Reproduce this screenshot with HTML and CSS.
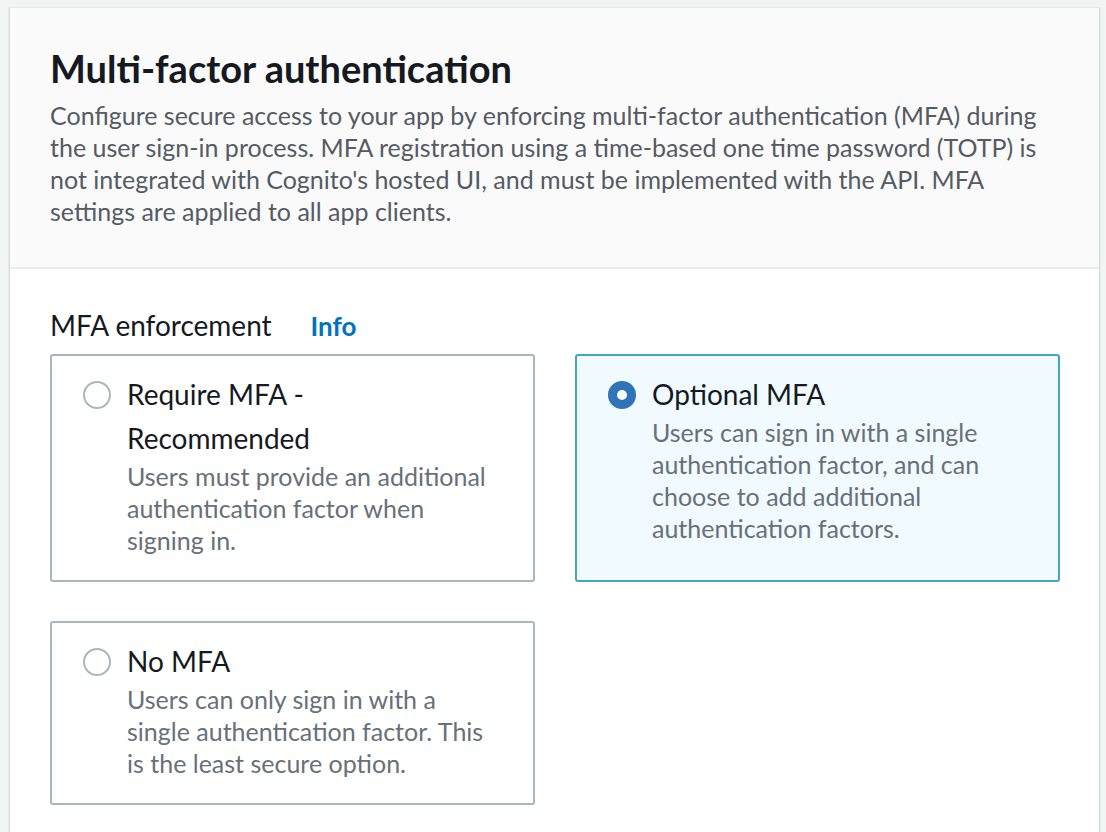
FILE: index.html
```html
<!DOCTYPE html>
<html lang="en">
<head>
<meta charset="utf-8">
<title>Multi-factor authentication</title>
<link rel="stylesheet" href="styles.css">
</head>
<body>
<div class="page">
  <section class="container">
    <header class="container-header">
      <h2 class="title">Multi-factor authentication</h2>
      <p class="description">Configure secure access to your app by enforcing multi-factor authentication (MFA) during the user sign-in process. MFA registration using a time-based one time password (TOTP) is not integrated with Cognito's hosted UI, and must be implemented with the API. MFA settings are applied to all app clients.</p>
    </header>
    <div class="container-body">
      <div class="field-label">
        <span class="label-text">MFA enforcement</span>
        <a class="info-link" href="#">Info</a>
      </div>
      <div class="tiles">
        <label class="tile">
          <span class="radio"></span>
          <span class="tile-text">
            <span class="tile-title">Require MFA - Recommended</span>
            <span class="tile-desc">Users must provide an additional authentication factor when signing in.</span>
          </span>
        </label>
        <label class="tile tile-selected">
          <span class="radio radio-checked"></span>
          <span class="tile-text">
            <span class="tile-title">Optional MFA</span>
            <span class="tile-desc">Users can sign in with a single authentication factor, and can choose to add additional authentication factors.</span>
          </span>
        </label>
        <label class="tile">
          <span class="radio"></span>
          <span class="tile-text">
            <span class="tile-title">No MFA</span>
            <span class="tile-desc">Users can only sign in with a single authentication factor. This is the least secure option.</span>
          </span>
        </label>
      </div>
    </div>
  </section>
</div>
</body>
</html>
```

FILE: styles.css
```css
html, body {
  margin: 0;
  padding: 0;
  background: #f2f3f3;
  font-family: Lato, "Open Sans", "Liberation Sans", sans-serif;
  color: #16191f;
  overflow: hidden;
}

.page {
  padding: 7px 6px 0 9px;
  height: 832px;
  box-sizing: border-box;
}

.container {
  background: #ffffff;
  border-left: 1px solid #d5dbdb;
  border-right: 1px solid #d5dbdb;
  border-top: 1px solid #e4e7e7;
  box-shadow: 0 1px 1px 0 rgba(0, 28, 36, 0.2);
  min-height: 900px;
}

.container-header {
  background: #fafafa;
  border-bottom: 2px solid #eaeded;
  padding: 38px 40px 40px 40px;
}

.title {
  margin: 0;
  font-size: 38px;
  line-height: 44px;
  font-weight: 700;
  color: #16191f;
}

.description {
  margin: 9px 0 0 0;
  font-size: 25px;
  line-height: 32px;
  color: #545b64;
}

.container-body {
  padding: 38px 40px 40px 40px;
}

.field-label {
  display: flex;
  align-items: baseline;
  gap: 39px;
  font-size: 28px;
  line-height: 36px;
  margin-bottom: 10px;
}

.label-text {
  color: #16191f;
}

.info-link {
  color: #0073bb;
  font-weight: 700;
  font-size: 26px;
  text-decoration: none;
}

.tiles {
  display: grid;
  grid-template-columns: 485px 485px;
  column-gap: 40px;
  row-gap: 39px;
}

.tile {
  display: flex;
  align-items: flex-start;
  gap: 16px;
  border: 2px solid #aab7b8;
  border-radius: 3px;
  padding: 16px 41px 24px 31px;
  background: #ffffff;
}

.tile-selected {
  border-color: #44a6c6;
  background: #f1faff;
}

.radio {
  flex: none;
  width: 28px;
  height: 28px;
  box-sizing: border-box;
  border: 2px solid #aab7b8;
  border-radius: 50%;
  margin-top: 9px;
  background: #ffffff;
}

.radio-checked {
  border: 9px solid #2f73b9;
  background: #ffffff;
}

.tile-text {
  display: flex;
  flex-direction: column;
  min-width: 0;
}

.tile-title {
  font-size: 28px;
  line-height: 44px;
  color: #16191f;
}

.tile-desc {
  font-size: 25px;
  line-height: 32px;
  color: #687078;
  margin-top: 0;
}
```
